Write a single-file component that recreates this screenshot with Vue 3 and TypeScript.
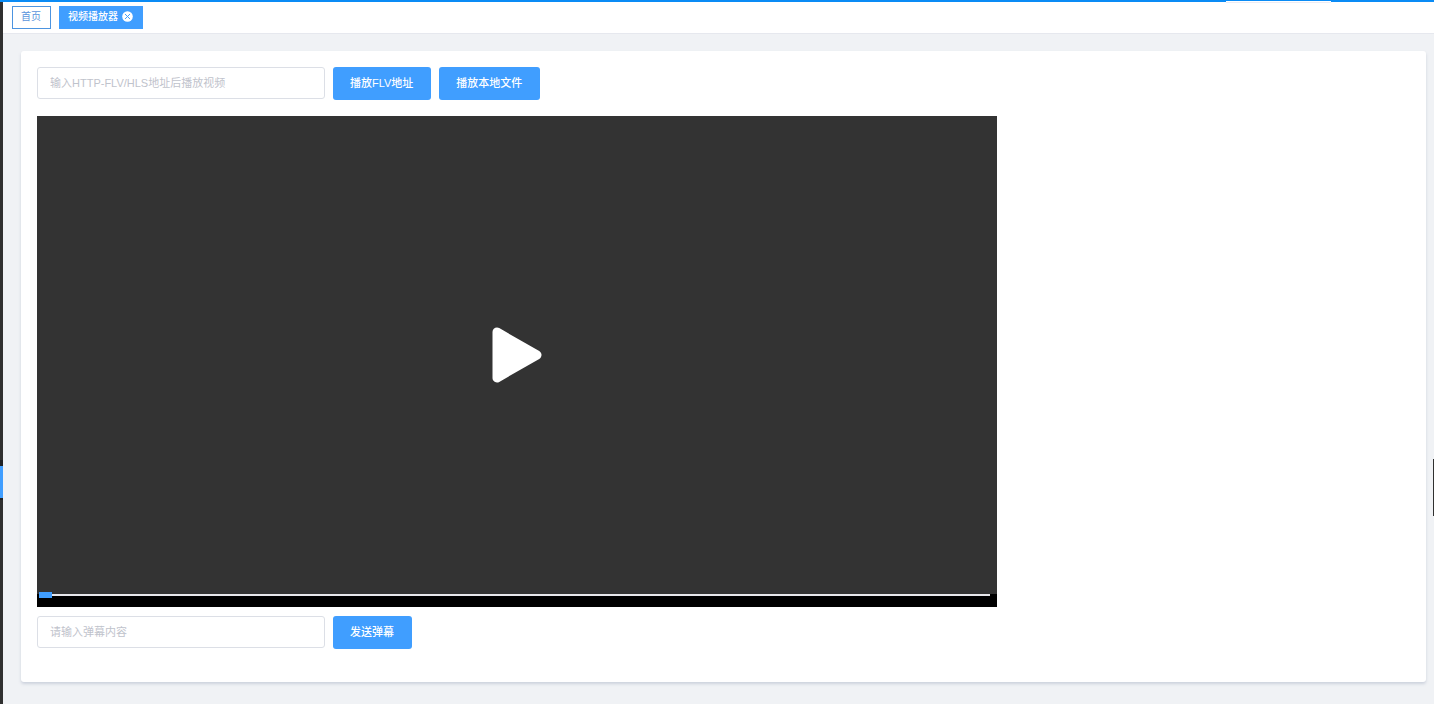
<script setup lang="ts">
import { ref } from 'vue'

interface Tag {
  title: string
  closable: boolean
}

const tags = ref<Tag[]>([
  { title: '首页', closable: false },
  { title: '视频播放器', closable: true },
])
const active = ref('视频播放器')
const address = ref('')
const message = ref('')
const progress = ref(0)

function closeTag(tag: Tag) {
  tags.value = tags.value.filter((t) => t !== tag)
  active.value = '首页'
}
</script>

<template>
  <div class="layout">
    <aside class="sidebar"><span class="sidebar-active"></span></aside>
    <div class="main">
      <nav class="tags">
        <div v-for="tag in tags" :key="tag.title" class="tag" :class="{ active: tag.title === active }">
          <a href="#" class="tag-link" @click.prevent="active = tag.title">{{ tag.title }}</a>
          <button v-if="tag.closable" type="button" class="tag-close" aria-label="关闭" @click="closeTag(tag)">
            <svg viewBox="0 0 11 11" width="11" height="11">
              <circle cx="5.5" cy="5.5" r="5.3" fill="#fff" />
              <path d="M3.3 3.3l4.4 4.4M7.7 3.3L3.3 7.7" stroke="#409eff" stroke-width="1" stroke-linecap="round" />
            </svg>
          </button>
        </div>
      </nav>
      <main class="content">
        <section class="card">
          <form class="row" @submit.prevent>
            <input v-model="address" class="field" type="text" aria-label="视频地址" placeholder="输入HTTP-FLV/HLS地址后播放视频" />
            <button type="submit" class="btn">播放FLV地址</button>
            <button type="button" class="btn">播放本地文件</button>
          </form>
          <div class="player">
            <button type="button" class="stage" aria-label="播放">
              <svg class="play" viewBox="0 0 50 56" width="50" height="56">
                <path d="M5 5L45 28L5 51Z" fill="#fff" stroke="#fff" stroke-width="9" stroke-linejoin="round" />
              </svg>
            </button>
            <div class="controls">
              <input v-model.number="progress" class="seek" type="range" min="0" max="100" aria-label="播放进度" />
            </div>
          </div>
          <form class="row" @submit.prevent>
            <input v-model="message" class="field" type="text" aria-label="弹幕内容" placeholder="请输入弹幕内容" />
            <button type="submit" class="btn">发送弹幕</button>
          </form>
        </section>
      </main>
    </div>
    <span class="top-line"></span>
    <span class="top-notch"></span>
    <span class="edge-handle"></span>
  </div>
</template>

<style>
body {
  margin: 0;
  background: #f0f2f5;
}
</style>

<style scoped>
.layout,
.layout * {
  box-sizing: border-box;
}
.layout {
  position: relative;
  display: flex;
  min-height: 100vh;
  overflow: hidden;
  background: #f0f2f5;
  font-family: "Liberation Sans", "Noto Sans CJK SC", sans-serif;
  font-size: 11px;
}
.layout button,
.layout input {
  font-family: inherit;
}
.sidebar {
  position: relative;
  flex: none;
  width: 3px;
  background: #303030;
}
.sidebar-active {
  position: absolute;
  top: 466px;
  left: 0;
  width: 3px;
  height: 32px;
  background: #409eff;
  box-shadow: 0 -6px #1f2124, 0 2px #1f2124;
}
.main {
  flex: 1;
  min-width: 0;
}
.tags {
  display: flex;
  gap: 8px;
  height: 34px;
  padding: 6px 9px 0;
  background: #fff;
  border-bottom: 1px solid #e6e8ee;
}
.tag {
  display: flex;
  align-items: center;
  gap: 4px;
  height: 23px;
  padding: 0 9px 2px 8px;
  border: 1px solid #4c94e0;
  background: #fff;
  color: #5b94dc;
  font-size: 10px;
}
.tag.active {
  border-color: #409eff;
  background: #409eff;
  color: #fff;
  font-weight: 500;
}
.tag-link {
  color: inherit;
  text-decoration: none;
  line-height: 19px;
}
.tag-close {
  display: flex;
  padding: 0;
  border: 0;
  background: none;
}
.content {
  padding: 17px 8px 22px 18px;
}
.card {
  padding: 16px 16px 33px;
  background: #fff;
  border-radius: 3px;
  box-shadow: 0 2px 3px rgba(100, 115, 150, 0.25);
}
.row {
  display: flex;
  align-items: flex-start;
  gap: 8px;
}
.field {
  width: 288px;
  height: 32px;
  padding: 0 12px;
  border: 1px solid #dcdfe6;
  border-radius: 3px;
  outline: none;
  background: #fff;
  color: #606266;
  font-size: 11px;
}
.field::placeholder {
  color: #bfc3cc;
  opacity: 1;
}
.btn {
  height: 33px;
  padding: 0 18px 3px 17px;
  border: 0;
  border-radius: 3px;
  background: #409eff;
  color: #fff;
  font-size: 11px;
  font-weight: 500;
  white-space: nowrap;
}
.player {
  max-width: 960px;
  margin: 16px 0 9px;
  background: #000;
}
.stage {
  display: flex;
  align-items: center;
  justify-content: center;
  width: 100%;
  aspect-ratio: 960 / 478;
  padding: 0;
  border: 0;
  background: #333;
}
.controls {
  display: flex;
  height: 13px;
  padding: 0 7px 0 2px;
}
.seek {
  flex: 1;
  height: 6px;
  margin: -2px 0 0;
  appearance: none;
  background: none;
}
.seek::-webkit-slider-runnable-track {
  height: 2px;
  background: #e8e8ec;
}
.seek::-webkit-slider-thumb {
  appearance: none;
  width: 13px;
  height: 6px;
  margin-top: -2px;
  background: #409eff;
}
.top-line {
  position: absolute;
  top: 0;
  left: 0;
  right: 0;
  height: 2px;
  background: #0a8bf5;
}
.top-notch {
  position: absolute;
  top: 1px;
  right: 103px;
  width: 105px;
  height: 2px;
  background: #fff;
  border-bottom: 1px solid #ececf4;
}
.edge-handle {
  position: absolute;
  top: 459px;
  right: 0;
  width: 1px;
  height: 57px;
  background: #303030;
}
</style>
